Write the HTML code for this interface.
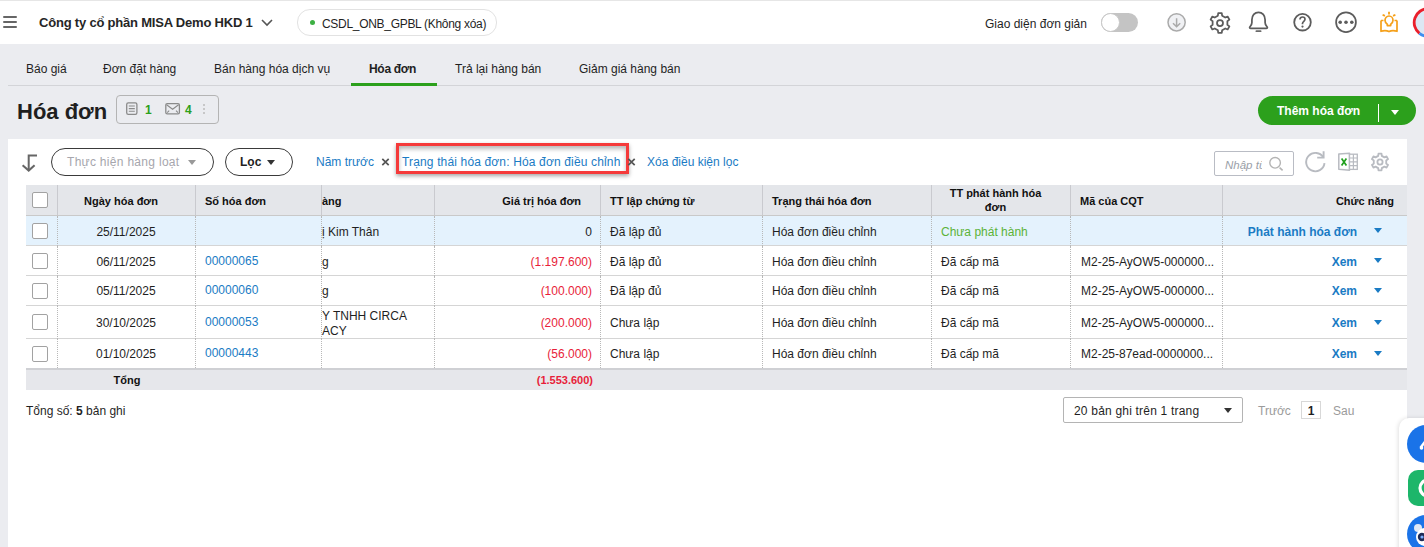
<!DOCTYPE html>
<html><head><meta charset="utf-8">
<style>
*{box-sizing:border-box;margin:0;padding:0}
html,body{width:1424px;height:547px;overflow:hidden;background:#ebecf0;font-family:"Liberation Sans",sans-serif;color:#1f1f1f;font-size:12px}
.a{position:absolute;white-space:nowrap}
.t{position:absolute;white-space:nowrap;line-height:14px}
#top{position:absolute;left:0;top:0;width:1424px;height:44px;background:#fff;border-top:1px solid #dcdcdc}
.ham{position:absolute;left:3px;width:14px;height:2px;background:#666;border-radius:1px}
#card{position:absolute;left:8px;top:139px;width:1399px;height:408px;background:#fff}
.pill{position:absolute;border:1.5px solid #3a3a3a;border-radius:14px;height:28px;top:148px}
.tri{position:absolute;width:0;height:0;border-left:4px solid transparent;border-right:4px solid transparent;border-top:5px solid #333}
.blue{color:#1a7bc4}
.row{position:absolute;left:26px;width:1381px;border-bottom:1px solid #d5d5d5}
.vd{position:absolute;width:0;border-left:1px dotted #b8b8b8}
.vs{position:absolute;width:1px;background:#c9cacf}
.cb{position:absolute;left:32px;width:16px;height:16px;border:1px solid #a2a2a2;border-radius:2px;background:#fff}
.hd{position:absolute;font-weight:bold;font-size:11px;line-height:14px;white-space:nowrap;color:#111}
</style></head><body>

<!-- top bar -->
<div class="a" style="left:0;top:0;width:1424px;height:44px;background:#fff"></div>
<div class="a" style="left:0;top:0;width:1424px;height:1px;background:#e6e6e6"></div>
<div class="ham" style="top:16px"></div>
<div class="ham" style="top:21px"></div>
<div class="ham" style="top:26px"></div>
<div class="t" style="left:39px;top:16px;font-size:13px;font-weight:bold;letter-spacing:-0.2px;color:#262626">Công ty cổ phần MISA Demo HKD 1</div>
<svg class="a" style="left:260px;top:17px" width="14" height="10" viewBox="0 0 14 10"><path d="M2 3 L7 8 L12 3" fill="none" stroke="#555" stroke-width="1.6"/></svg>
<div class="a" style="left:297px;top:9px;width:200px;height:27px;border:1px solid #e2e2e2;border-radius:13px"></div>
<div class="a" style="left:310px;top:20px;width:5px;height:5px;border-radius:50%;background:#3cb043"></div>
<div class="t" style="left:322px;top:17px;font-size:12px;letter-spacing:-0.3px">CSDL_ONB_GPBL (Không xóa)</div>
<div class="t" style="left:985px;top:17px;font-size:12px">Giao diện đơn giản</div>
<div class="a" style="left:1101px;top:13px;width:37px;height:19px;border-radius:10px;background:#c4c4c4"></div>
<div class="a" style="left:1101px;top:13px;width:19px;height:19px;border-radius:50%;background:#fff;border:1px solid #c8c8c8"></div>
<svg class="a" style="left:1164px;top:10px" width="25" height="25" viewBox="0 0 25 25">
 <circle cx="12.6" cy="12.3" r="8.6" fill="#f0f1f4" stroke="#aaa" stroke-width="1.5"/>
 <path d="M12.6 8.3 V16.6 M9 13.3 L12.6 16.8 L16.2 13.3" fill="none" stroke="#aaa" stroke-width="1.5"/>
</svg>
<svg class="a" style="left:1208px;top:10.5px" width="24" height="24" viewBox="0 0 24 24">
 <path d="M9.88 4.70 L10.23 2.16 L13.77 2.16 L14.12 4.70 L17.26 6.51 L19.64 5.55 L21.41 8.61 L19.38 10.19 L19.38 13.81 L21.41 15.39 L19.64 18.45 L17.26 17.49 L14.12 19.30 L13.77 21.84 L10.23 21.84 L9.88 19.30 L6.74 17.49 L4.36 18.45 L2.59 15.39 L4.62 13.81 L4.62 10.19 L2.59 8.61 L4.36 5.55 L6.74 6.51Z" fill="none" stroke="#5c5c5c" stroke-width="1.75" stroke-linejoin="round"/>
 <circle cx="12" cy="12" r="3" fill="none" stroke="#5c5c5c" stroke-width="1.75"/>
</svg>
<svg class="a" style="left:1247px;top:10px" width="23" height="24" viewBox="0 0 23 24">
 <path d="M2.6 17.6 C2.6 16.4 4.9 15.6 4.9 12.6 V9.8 C4.9 5.5 7.7 2.3 11.5 2.3 C15.3 2.3 18.1 5.5 18.1 9.8 V12.6 C18.1 15.6 20.4 16.4 20.4 17.6 C20.4 18.2 20 18.4 19.4 18.4 H3.6 C3 18.4 2.6 18.2 2.6 17.6 Z" fill="none" stroke="#5c5c5c" stroke-width="1.75" stroke-linejoin="round"/>
 <path d="M9.4 21.2 H13.6" stroke="#6a6a6a" stroke-width="1.8" stroke-linecap="round"/>
</svg>
<svg class="a" style="left:1290px;top:10px" width="25" height="25" viewBox="0 0 25 25">
 <circle cx="12.5" cy="12.2" r="8.3" fill="none" stroke="#5c5c5c" stroke-width="1.8"/>
 <path d="M10 9.6 C10 7.9 11.1 7 12.5 7 C13.9 7 15 7.9 15 9.3 C15 11.3 12.5 11.4 12.5 13.6 V14.2" fill="none" stroke="#5c5c5c" stroke-width="1.7"/>
 <circle cx="12.5" cy="16.6" r="1.1" fill="#5c5c5c"/>
</svg>
<svg class="a" style="left:1334px;top:10px" width="25" height="25" viewBox="0 0 25 25">
 <circle cx="12" cy="12.2" r="9.9" fill="none" stroke="#5c5c5c" stroke-width="1.75"/>
 <circle cx="6.2" cy="12.2" r="1.8" fill="#5c5c5c"/><circle cx="12" cy="12.2" r="1.8" fill="#5c5c5c"/><circle cx="17.8" cy="12.2" r="1.8" fill="#5c5c5c"/>
</svg>
<svg class="a" style="left:1378px;top:10px" width="22" height="24" viewBox="0 0 22 24">
 <path d="M3 10.5 V21.3 C6.5 20 8.5 20.2 11 21.6 C13.5 20.2 15.5 20 19 21.3 V10.5" fill="none" stroke="#f5a01a" stroke-width="1.7" stroke-linejoin="round"/>
 <path d="M3 10.5 H5.5 M19 10.5 H16.5" stroke="#f5a01a" stroke-width="1.7"/>
 <path d="M9.3 15.6 V14.2 C7.8 13.3 7 12 7 10.3 C7 7.9 8.8 6 11 6 C13.2 6 15 7.9 15 10.3 C15 12 14.2 13.3 12.7 14.2 V15.6 Z" fill="none" stroke="#f5a01a" stroke-width="1.7" stroke-linejoin="round"/>
 <path d="M11 1.8 V4.6 M4.6 4.8 L6.9 5.9 M17.4 4.8 L15.1 5.9" stroke="#f5a01a" stroke-width="1.8"/>
</svg>
<svg class="a" style="left:1411px;top:6px" width="13" height="34" viewBox="0 0 13 34">
 <circle cx="17" cy="16.5" r="13" fill="#dce8f4"/>
 <path d="M17 2.7 A13.8 13.8 0 0 0 8.4 27.3" fill="none" stroke="#ea1f2b" stroke-width="2.8"/>
 <path d="M8.4 27.3 A13.8 13.8 0 0 0 17 30.3" fill="none" stroke="#3d8ef0" stroke-width="2.8"/>
</svg>

<!-- tabs -->
<div class="a" style="left:8px;top:85px;width:1416px;height:1px;background:#d3d4d8"></div>
<div class="t" style="left:26px;top:62px">Báo giá</div>
<div class="t" style="left:103px;top:62px">Đơn đặt hàng</div>
<div class="t" style="left:214px;top:62px">Bán hàng hóa dịch vụ</div>
<div class="t" style="left:369px;top:62px;font-weight:bold;letter-spacing:-0.3px">Hóa đơn</div>
<div class="t" style="left:455px;top:62px">Trả lại hàng bán</div>
<div class="t" style="left:579px;top:62px">Giảm giá hàng bán</div>
<div class="a" style="left:351px;top:83px;width:86px;height:3px;background:#2ca01c"></div>

<!-- title -->
<div class="t" style="left:17px;top:99px;font-size:22px;line-height:26px;font-weight:bold">Hóa đơn</div>
<div class="a" style="left:116px;top:95px;width:103px;height:29px;border:1px solid #b4b4b4;border-radius:4px"></div>
<div class="a" style="left:1258px;top:96px;width:158px;height:29px;border-radius:15px;background:#2ca01c"></div>
<div class="t" style="left:1277px;top:104px;color:#fff;font-weight:bold;font-size:12px">Thêm hóa đơn</div>
<div class="a" style="left:1378px;top:104px;width:1px;height:18px;background:#fff"></div>
<div class="tri" style="left:1391px;top:110px;border-top-color:#fff"></div>

<div id="card"></div>

<!-- filter bar -->
<div class="pill" style="left:51px;width:163px"></div>
<div class="t" style="left:67px;top:155px;color:#a6a6ad;letter-spacing:0.3px">Thực hiện hàng loạt</div>
<div class="tri" style="left:188px;top:160px;border-top-color:#999"></div>
<div class="pill" style="left:225px;width:68px"></div>
<div class="t" style="left:240px;top:155px;font-weight:bold">Lọc</div>
<div class="tri" style="left:267px;top:160px"></div>
<div class="t blue" style="left:316px;top:155px">Năm trước</div>
<svg class="a" style="left:380px;top:156px" width="12" height="12" viewBox="0 0 12 12"><path d="M2.3 2.8 L8.7 9.2 M8.7 2.8 L2.3 9.2" stroke="#555" stroke-width="1.7"/></svg>
<div class="a" style="left:396px;top:143px;width:233px;height:31px;border:3px solid #f53a3a;box-shadow:0 2px 4px rgba(0,0,0,.35), inset 0 3px 4px rgba(0,0,0,.28)"></div>
<div class="t blue" style="left:402px;top:155px;letter-spacing:0.15px">Trạng thái hóa đơn: Hóa đơn điều chỉnh</div>
<svg class="a" style="left:626px;top:156px" width="12" height="12" viewBox="0 0 12 12"><path d="M2.3 2.8 L8.7 9.2 M8.7 2.8 L2.3 9.2" stroke="#555" stroke-width="1.7"/></svg>
<div class="t blue" style="left:647px;top:155px">Xóa điều kiện lọc</div>
<div class="a" style="left:1214px;top:151px;width:80px;height:25px;border:1px solid #b9bcc4;border-radius:2px"></div>
<div class="t" style="left:1225px;top:158px;width:37px;overflow:hidden;font-style:italic;color:#9aa0a8;font-size:11.5px">Nhập từ khóa</div>

<!-- table -->
<div class="row" style="top:185px;height:31px;background:#e4e6ea;border-bottom-color:#c9c9c9"></div>
<div class="cb" style="top:192px"></div>
<div class="vs" style="left:57px;top:185px;height:30px"></div>
<div class="vs" style="left:195px;top:185px;height:30px"></div>
<div class="vs" style="left:321px;top:185px;height:30px"></div>
<div class="vs" style="left:434px;top:185px;height:30px"></div>
<div class="vs" style="left:600px;top:185px;height:30px"></div>
<div class="vs" style="left:762px;top:185px;height:30px"></div>
<div class="vs" style="left:931px;top:185px;height:30px"></div>
<div class="vs" style="left:1070px;top:185px;height:30px"></div>
<div class="vs" style="left:1222px;top:185px;height:30px"></div>
<div class="hd" style="left:57px;width:138px;text-align:center;top:194px;padding-right:10px">Ngày hóa đơn</div>
<div class="hd" style="left:205px;top:194px">Số hóa đơn</div>
<div class="hd" style="left:322px;top:194px">àng</div>
<div class="hd" style="left:434px;width:147px;text-align:right;top:194px">Giá trị hóa đơn</div>
<div class="hd" style="left:610px;top:194px">TT lập chứng từ</div>
<div class="hd" style="left:772px;top:194px">Trạng thái hóa đơn</div>
<div class="hd" style="left:931px;width:139px;text-align:center;top:186px;line-height:14px;padding-right:10px">TT phát hành hóa<br>đơn</div>
<div class="hd" style="left:1080px;top:194px">Mã của CQT</div>
<div class="hd" style="left:1222px;width:172px;text-align:right;top:194px">Chức năng</div>
<!-- rows -->
<div class="row" style="top:216px;height:30px;background:#e4f2fd"></div>
<div class="cb" style="top:223px"></div>
<div class="t" style="left:57px;width:138px;text-align:center;top:225px">25/11/2025</div>
<div class="t" style="left:322px;top:225px">ị Kim Thân</div>
<div class="t" style="left:434px;width:158px;text-align:right;top:225px;color:#1f1f1f">0</div>
<div class="t" style="left:610px;top:225px">Đã lập đủ</div>
<div class="t" style="left:772px;top:225px">Hóa đơn điều chỉnh</div>
<div class="t" style="left:941px;top:225px;color:#5cb338">Chưa phát hành</div>
<div class="t blue" style="left:1222px;width:135px;text-align:right;top:225px;font-weight:bold">Phát hành hóa đơn</div>
<div class="tri" style="left:1374px;top:228px;border-top-color:#1a7bc4"></div>
<div class="vd" style="left:57px;top:216px;height:30px"></div>
<div class="vd" style="left:195px;top:216px;height:30px"></div>
<div class="vd" style="left:321px;top:216px;height:30px"></div>
<div class="vd" style="left:434px;top:216px;height:30px"></div>
<div class="vd" style="left:600px;top:216px;height:30px"></div>
<div class="vd" style="left:762px;top:216px;height:30px"></div>
<div class="vd" style="left:931px;top:216px;height:30px"></div>
<div class="vd" style="left:1070px;top:216px;height:30px"></div>
<div class="vd" style="left:1222px;top:216px;height:30px"></div>
<div class="row" style="top:246px;height:30px;background:#fff"></div>
<div class="cb" style="top:253px"></div>
<div class="t" style="left:57px;width:138px;text-align:center;top:255px">06/11/2025</div>
<div class="t blue" style="left:205px;top:254px">00000065</div>
<div class="t" style="left:322px;top:255px">g</div>
<div class="t" style="left:434px;width:158px;text-align:right;top:255px;color:#e81e3a">(1.197.600)</div>
<div class="t" style="left:610px;top:255px">Đã lập đủ</div>
<div class="t" style="left:772px;top:255px">Hóa đơn điều chỉnh</div>
<div class="t" style="left:941px;top:255px;color:#1f1f1f">Đã cấp mã</div>
<div class="t" style="left:1081px;top:255px">M2-25-AyOW5-000000...</div>
<div class="t blue" style="left:1222px;width:135px;text-align:right;top:255px;font-weight:bold">Xem</div>
<div class="tri" style="left:1374px;top:258px;border-top-color:#1a7bc4"></div>
<div class="vd" style="left:57px;top:246px;height:30px"></div>
<div class="vd" style="left:195px;top:246px;height:30px"></div>
<div class="vd" style="left:321px;top:246px;height:30px"></div>
<div class="vd" style="left:434px;top:246px;height:30px"></div>
<div class="vd" style="left:600px;top:246px;height:30px"></div>
<div class="vd" style="left:762px;top:246px;height:30px"></div>
<div class="vd" style="left:931px;top:246px;height:30px"></div>
<div class="vd" style="left:1070px;top:246px;height:30px"></div>
<div class="vd" style="left:1222px;top:246px;height:30px"></div>
<div class="row" style="top:276px;height:30px;background:#fff"></div>
<div class="cb" style="top:283px"></div>
<div class="t" style="left:57px;width:138px;text-align:center;top:284px">05/11/2025</div>
<div class="t blue" style="left:205px;top:283px">00000060</div>
<div class="t" style="left:322px;top:284px">g</div>
<div class="t" style="left:434px;width:158px;text-align:right;top:284px;color:#e81e3a">(100.000)</div>
<div class="t" style="left:610px;top:284px">Đã lập đủ</div>
<div class="t" style="left:772px;top:284px">Hóa đơn điều chỉnh</div>
<div class="t" style="left:941px;top:284px;color:#1f1f1f">Đã cấp mã</div>
<div class="t" style="left:1081px;top:284px">M2-25-AyOW5-000000...</div>
<div class="t blue" style="left:1222px;width:135px;text-align:right;top:284px;font-weight:bold">Xem</div>
<div class="tri" style="left:1374px;top:288px;border-top-color:#1a7bc4"></div>
<div class="vd" style="left:57px;top:276px;height:30px"></div>
<div class="vd" style="left:195px;top:276px;height:30px"></div>
<div class="vd" style="left:321px;top:276px;height:30px"></div>
<div class="vd" style="left:434px;top:276px;height:30px"></div>
<div class="vd" style="left:600px;top:276px;height:30px"></div>
<div class="vd" style="left:762px;top:276px;height:30px"></div>
<div class="vd" style="left:931px;top:276px;height:30px"></div>
<div class="vd" style="left:1070px;top:276px;height:30px"></div>
<div class="vd" style="left:1222px;top:276px;height:30px"></div>
<div class="row" style="top:306px;height:33px;background:#fff"></div>
<div class="cb" style="top:314px"></div>
<div class="t" style="left:57px;width:138px;text-align:center;top:316px">30/10/2025</div>
<div class="t blue" style="left:205px;top:315px">00000053</div>
<div class="t" style="left:322px;top:309px;line-height:15px">Y TNHH CIRCA<br>ACY</div>
<div class="t" style="left:434px;width:158px;text-align:right;top:316px;color:#e81e3a">(200.000)</div>
<div class="t" style="left:610px;top:316px">Chưa lập</div>
<div class="t" style="left:772px;top:316px">Hóa đơn điều chỉnh</div>
<div class="t" style="left:941px;top:316px;color:#1f1f1f">Đã cấp mã</div>
<div class="t" style="left:1081px;top:316px">M2-25-AyOW5-000000...</div>
<div class="t blue" style="left:1222px;width:135px;text-align:right;top:316px;font-weight:bold">Xem</div>
<div class="tri" style="left:1374px;top:320px;border-top-color:#1a7bc4"></div>
<div class="vd" style="left:57px;top:306px;height:33px"></div>
<div class="vd" style="left:195px;top:306px;height:33px"></div>
<div class="vd" style="left:321px;top:306px;height:33px"></div>
<div class="vd" style="left:434px;top:306px;height:33px"></div>
<div class="vd" style="left:600px;top:306px;height:33px"></div>
<div class="vd" style="left:762px;top:306px;height:33px"></div>
<div class="vd" style="left:931px;top:306px;height:33px"></div>
<div class="vd" style="left:1070px;top:306px;height:33px"></div>
<div class="vd" style="left:1222px;top:306px;height:33px"></div>
<div class="row" style="top:339px;height:29px;background:#fff;border-bottom:none"></div>
<div class="cb" style="top:346px"></div>
<div class="t" style="left:57px;width:138px;text-align:center;top:347px">01/10/2025</div>
<div class="t blue" style="left:205px;top:346px">00000443</div>
<div class="t" style="left:434px;width:158px;text-align:right;top:347px;color:#e81e3a">(56.000)</div>
<div class="t" style="left:610px;top:347px">Chưa lập</div>
<div class="t" style="left:772px;top:347px">Hóa đơn điều chỉnh</div>
<div class="t" style="left:941px;top:347px;color:#1f1f1f">Đã cấp mã</div>
<div class="t" style="left:1081px;top:347px">M2-25-87ead-0000000...</div>
<div class="t blue" style="left:1222px;width:135px;text-align:right;top:347px;font-weight:bold">Xem</div>
<div class="tri" style="left:1374px;top:351px;border-top-color:#1a7bc4"></div>
<div class="vd" style="left:57px;top:339px;height:29px"></div>
<div class="vd" style="left:195px;top:339px;height:29px"></div>
<div class="vd" style="left:321px;top:339px;height:29px"></div>
<div class="vd" style="left:434px;top:339px;height:29px"></div>
<div class="vd" style="left:600px;top:339px;height:29px"></div>
<div class="vd" style="left:762px;top:339px;height:29px"></div>
<div class="vd" style="left:931px;top:339px;height:29px"></div>
<div class="vd" style="left:1070px;top:339px;height:29px"></div>
<div class="vd" style="left:1222px;top:339px;height:29px"></div>
<!-- /rows -->
<div class="row" style="top:368px;height:22px;background:#e6e7eb;border-top:2px solid #cfd0d4;border-bottom:none"></div>
<div class="hd" style="left:57px;width:138px;text-align:center;top:373px;padding-left:2px">Tổng</div>
<div class="hd" style="left:434px;width:159px;text-align:right;top:373px;color:#e81e3a">(1.553.600)</div>
<div class="t" style="left:26px;top:404px">Tổng số: <b>5</b> bản ghi</div>
<div class="a" style="left:1063px;top:397px;width:180px;height:26px;border:1px solid #b4b4b4;border-radius:2px;background:#fff"></div>
<div class="t" style="left:1074px;top:404px;letter-spacing:0.2px">20 bản ghi trên 1 trang</div>
<div class="tri" style="left:1224px;top:408px;border-top-color:#333"></div>
<div class="t" style="left:1258px;top:404px;color:#9b9b9b">Trước</div>
<div class="a" style="left:1301px;top:401px;width:20px;height:18px;border:1px solid #d8d8d8"></div>
<div class="t" style="left:1301px;width:20px;text-align:center;top:404px;font-weight:bold">1</div>
<div class="t" style="left:1333px;top:404px;color:#9b9b9b">Sau</div>


<!-- filter icons -->
<svg class="a" style="left:18px;top:150px" width="24" height="26" viewBox="18 150 24 26">
 <path d="M37 155.5 H28.7 V170" fill="none" stroke="#666" stroke-width="2"/>
 <path d="M22.6 165.2 L28.7 170.6 L34.6 165.2" fill="none" stroke="#666" stroke-width="2"/>
</svg>
<svg class="a" style="left:1262px;top:150px" width="34" height="26" viewBox="1262 150 34 26">
 <circle cx="1275.1" cy="162.8" r="5.3" fill="none" stroke="#b4b4b4" stroke-width="1.4"/>
 <path d="M1279.6 167.6 L1282.6 170.4" stroke="#b4b4b4" stroke-width="1.6"/>
</svg>
<svg class="a" style="left:1300px;top:148px" width="30" height="28" viewBox="1300 148 30 28">
 <path d="M1323.4 157.6 A9.2 9.2 0 1 0 1324.5 163.2" fill="none" stroke="#b8bbc1" stroke-width="1.9"/>
 <path d="M1323.6 151.2 V157.6 H1317.2" fill="none" stroke="#b8bbc1" stroke-width="1.9"/>
</svg>
<svg class="a" style="left:1336px;top:151px" width="24" height="21" viewBox="1336 151 24 21">
 <path d="M1338.8 154 L1349.5 153.2 V170.2 L1338.8 169.2 Z" fill="#fff" stroke="#b8bbc1" stroke-width="1.5" stroke-linejoin="round"/>
 <rect x="1349.5" y="154.2" width="7.8" height="15.2" fill="#fff" stroke="#b8bbc1" stroke-width="1.3"/>
 <path d="M1353.4 154.2 V169.4 M1349.5 158 H1357.3 M1349.5 161.8 H1357.3 M1349.5 165.6 H1357.3" stroke="#b8bbc1" stroke-width="1.2"/>
 <path d="M1341.6 158.4 L1346.4 165.4 M1346.4 158.4 L1341.6 165.4" stroke="#22a120" stroke-width="1.7"/>
</svg>
<svg class="a" style="left:1368px;top:150px" width="24" height="24" viewBox="0 0 24 24">
 <path d="M10.21 5.85 L10.48 3.54 L13.52 3.54 L13.79 5.85 L16.43 7.38 L18.57 6.45 L20.09 9.09 L18.22 10.47 L18.22 13.53 L20.09 14.91 L18.57 17.55 L16.43 16.62 L13.79 18.15 L13.52 20.46 L10.48 20.46 L10.21 18.15 L7.57 16.62 L5.43 17.55 L3.91 14.91 L5.78 13.53 L5.78 10.47 L3.91 9.09 L5.43 6.45 L7.57 7.38Z" fill="none" stroke="#b8bbc1" stroke-width="1.8" stroke-linejoin="round"/>
 <circle cx="12" cy="12" r="2.6" fill="none" stroke="#b8bbc1" stroke-width="1.8"/>
</svg>
<!-- badge icons -->
<svg class="a" style="left:124px;top:100px" width="16" height="17" viewBox="124 100 16 17">
 <rect x="126.7" y="102.8" width="10.2" height="11.6" rx="1.6" fill="none" stroke="#8a8a8a" stroke-width="1.3"/>
 <path d="M128.8 106 H134.8 M128.8 108.6 H134.8 M128.8 111.2 H134.8" stroke="#8a8a8a" stroke-width="1.1"/>
</svg>
<div class="t" style="left:145px;top:103px;font-weight:bold;color:#2ca01c;font-size:12px">1</div>
<svg class="a" style="left:163px;top:101px" width="19" height="15" viewBox="163 101 19 15">
 <rect x="165.8" y="103.6" width="13.6" height="10.2" rx="1.4" fill="none" stroke="#8a8a8a" stroke-width="1.3"/>
 <path d="M166.6 104.8 L172.6 109.2 L178.6 104.8 M167.2 112.6 L169.2 110.6 M178 112.6 L176 110.6" fill="none" stroke="#8a8a8a" stroke-width="1.1"/>
</svg>
<div class="t" style="left:185px;top:103px;font-weight:bold;color:#2ca01c;font-size:12px">4</div>
<div class="a" style="left:203px;top:104px;width:2px;height:2px;background:#bbb;border-radius:1px"></div>
<div class="a" style="left:203px;top:108px;width:2px;height:2px;background:#bbb;border-radius:1px"></div>
<div class="a" style="left:203px;top:112px;width:2px;height:2px;background:#bbb;border-radius:1px"></div>
<!-- widget -->
<div class="a" style="left:1399px;top:418px;width:40px;height:140px;background:#fff;border-radius:10px 0 0 0;box-shadow:-1px 0 4px rgba(0,0,0,.12)"></div>
<div class="a" style="left:1407px;top:425px;width:38px;height:38px;border-radius:50%;background:#1a73e8"></div>
<div class="a" style="left:1408px;top:470px;width:36px;height:36px;border-radius:10px;background:#1db66a"></div>
<div class="a" style="left:1407px;top:515px;width:38px;height:38px;border-radius:50%;background:#1a73e8"></div>
<svg class="a" style="left:1399px;top:418px" width="25" height="129" viewBox="1399 418 25 129">
 <path d="M1419.5 447 L1424 441 L1424 445 L1421.5 449 Z" fill="#fff"/>
 <circle cx="1421.5" cy="448" r="1.8" fill="#fff"/>
 <circle cx="1428" cy="488" r="8" fill="none" stroke="#fff" stroke-width="3.2"/>
 <circle cx="1428" cy="488" r="3.2" fill="#fff"/>
 <circle cx="1418" cy="528" r="4" fill="#dfe8f5"/>
 <circle cx="1425" cy="537" r="9" fill="#fff"/>
 <circle cx="1422" cy="537" r="4.2" fill="#1e2a55"/>
 <circle cx="1422" cy="537" r="1.6" fill="#7fb0ff"/>
</svg>
</body></html>
